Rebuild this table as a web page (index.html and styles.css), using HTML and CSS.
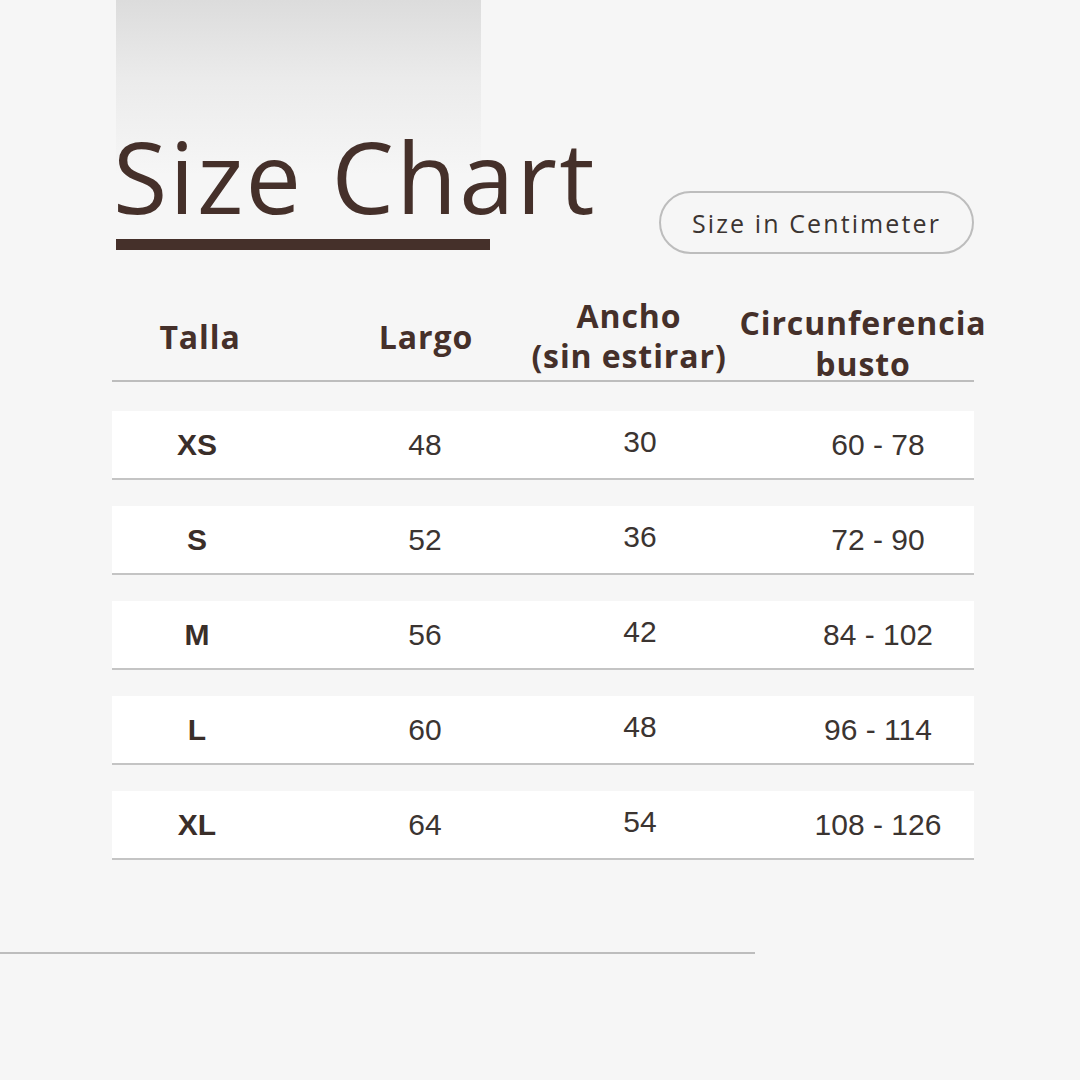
FILE: index.html
```html
<!DOCTYPE html>
<html lang="es">
<head>
<meta charset="utf-8">
<title>Size Chart</title>
<link rel="stylesheet" href="styles.css">
</head>
<body>
<main class="page">
  <div class="fade-box"></div>
  <section class="top">
    <div class="title-wrap">
      <h1 class="title">Size Chart</h1>
      <div class="title-bar"></div>
    </div>
    <div class="pill">Size in Centimeter</div>
  </section>

  <section class="chart">
    <div class="chart-head">
      <div class="hcell c1">Talla</div>
      <div class="hcell c2">Largo</div>
      <div class="hcell c3">Ancho<br>(sin estirar)</div>
      <div class="hcell c4">Circunferencia<br>busto</div>
    </div>

    <div class="chart-row">
      <div class="cell c1 size">XS</div>
      <div class="cell c2">48</div>
      <div class="cell c3">30</div>
      <div class="cell c4">60 - 78</div>
    </div>
    <div class="chart-row">
      <div class="cell c1 size">S</div>
      <div class="cell c2">52</div>
      <div class="cell c3">36</div>
      <div class="cell c4">72 - 90</div>
    </div>
    <div class="chart-row">
      <div class="cell c1 size">M</div>
      <div class="cell c2">56</div>
      <div class="cell c3">42</div>
      <div class="cell c4">84 - 102</div>
    </div>
    <div class="chart-row">
      <div class="cell c1 size">L</div>
      <div class="cell c2">60</div>
      <div class="cell c3">48</div>
      <div class="cell c4">96 - 114</div>
    </div>
    <div class="chart-row">
      <div class="cell c1 size">XL</div>
      <div class="cell c2">64</div>
      <div class="cell c3">54</div>
      <div class="cell c4">108 - 126</div>
    </div>
  </section>

  <div class="bottom-rule"></div>
</main>
</body>
</html>
```

FILE: styles.css
```css
html, body {
  margin: 0;
  padding: 0;
  background: #f6f6f6;
}

.page {
  position: relative;
  width: 1080px;
  height: 1080px;
  padding-top: 124px;
  box-sizing: border-box;
  overflow: hidden;
}

.fade-box {
  position: absolute;
  left: 116px;
  top: 0;
  width: 365px;
  height: 175px;
  background: linear-gradient(to bottom, #dcdcdc 0%, #ebebeb 45%, #f6f6f6 100%);
}

.top {
  position: relative;
  display: flex;
  align-items: flex-start;
  width: 862px;
  margin-left: 112px;
}

.title-wrap {
  display: flex;
  flex-direction: column;
}

.title {
  margin: 0;
  font-family: "Open Sans", "Noto Sans", sans-serif;
  font-weight: 400;
  font-size: 99px;
  line-height: 104px;
  padding-left: 1px;
  color: #45302a;
  letter-spacing: 2.3px;
  white-space: nowrap;
}

.title-bar {
  margin-top: 11px;
  margin-left: 4px;
  width: 374px;
  height: 11px;
  background: #45302a;
}

.pill {
  margin-left: auto;
  margin-top: 67px;
  width: 315px;
  height: 63px;
  box-sizing: border-box;
  border: 2px solid #bdbdbd;
  border-radius: 32px;
  display: flex;
  align-items: center;
  justify-content: center;
  font-family: "Open Sans", "Noto Sans", sans-serif;
  font-size: 25px;
  letter-spacing: 2.1px;
  color: #3b3431;
}

.chart {
  margin-top: 41px;
  margin-left: 112px;
  width: 862px;
}

.chart-head,
.chart-row {
  display: grid;
  grid-template-columns: 170px 286px 144px 262px;
}

.chart-head {
  padding-bottom: 3px;
  border-bottom: 2px solid #bdbdbd;
  font-family: "Open Sans", "Noto Sans", sans-serif;
  font-weight: 700;
  font-size: 32px;
  line-height: 40px;
  letter-spacing: 0.9px;
  color: #45302a;
}

.hcell {
  display: flex;
  align-items: center;
  justify-content: center;
  text-align: center;
  white-space: nowrap;
}

.hcell.c1 { padding-left: 6px; padding-top: 2px; }
.hcell.c2 { padding-left: 2px; padding-top: 2px; }
.hcell.c3 { padding-right: 22px; }
.hcell.c4 {
  padding-left: 40px;
  padding-top: 7px;
  line-height: 41px;
  margin-bottom: -7px;
}

.chart-row {
  height: 67px;
  margin-top: 26px;
  background: #ffffff;
  border-bottom: 2px solid #c4c4c4;
  font-family: "Liberation Sans", Arial, sans-serif;
  font-size: 30px;
  color: #3b3431;
}

.chart-head + .chart-row {
  margin-top: 29px;
}

.cell {
  display: flex;
  align-items: center;
  justify-content: center;
  white-space: nowrap;
}

.cell.size {
  font-weight: 700;
  font-size: 30px;
  color: #3a2e29;
}
.cell.c3 { padding-bottom: 6px; }
.cell.c4 { padding-left: 70px; }

.bottom-rule {
  margin-top: 92px;
  width: 755px;
  height: 2px;
  background: #bdbdbd;
}
```
